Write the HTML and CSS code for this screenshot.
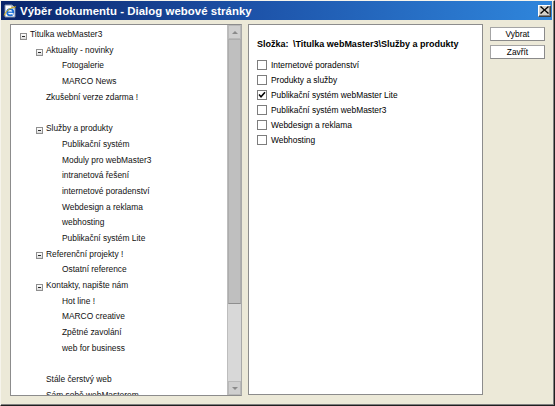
FILE: index.html
```html
<!DOCTYPE html>
<html lang="cs">
<head>
<meta charset="utf-8">
<title>Výběr dokumentu - Dialog webové stránky</title>
<link rel="stylesheet" href="styles.css">
</head>
<body>
<div class="window">
  <div class="titlebar">
    <svg class="app-icon" viewBox="0 0 14 14" width="14" height="14">
      <path d="M2 1 H9 L12 4 V13 H2 Z" fill="#fff" stroke="#7a8aa8" stroke-width="1"/>
      <path d="M9 1 V4 H12" fill="#dfe6f2" stroke="#7a8aa8" stroke-width="1"/>
      <circle cx="7.2" cy="8.2" r="3.1" fill="none" stroke="#1b6fd6" stroke-width="1.8"/>
      <path d="M4.4 8.2 H10.2" stroke="#1b6fd6" stroke-width="1.3"/>
      <path d="M8.6 9.6 L10.6 10.2" stroke="#fff" stroke-width="1.4"/>
      <path d="M1.2 11.5 C3 6 9 3 13 2.8" fill="none" stroke="#e8b400" stroke-width="1"/>
    </svg>
    <span class="title">Výběr dokumentu - Dialog webové stránky</span>
    <span class="close">
      <svg viewBox="0 0 9 8" width="9" height="8"><path d="M1 0 L4.5 3.3 L8 0 L9 1 L5.5 4 L9 7 L8 8 L4.5 4.7 L1 8 L0 7 L3.5 4 L0 1 Z" fill="#000"/></svg>
    </span>
  </div>
  <div class="content">
    <div class="tree-panel">
      <div class="tree">
        <div class="row l0"><span class="twisty minus"></span>Titulka webMaster3</div>
        <div class="row l1"><span class="twisty minus"></span>Aktuality - novinky</div>
        <div class="row l2"><span class="twisty"></span>Fotogalerie</div>
        <div class="row l2"><span class="twisty"></span>MARCO News</div>
        <div class="row l1"><span class="twisty"></span>Zkušební verze zdarma !</div>
        <div class="row l1"><span class="twisty"></span></div>
        <div class="row l1"><span class="twisty minus"></span>Služby a produkty</div>
        <div class="row l2"><span class="twisty"></span>Publikační systém</div>
        <div class="row l2"><span class="twisty"></span>Moduly pro webMaster3</div>
        <div class="row l2"><span class="twisty"></span>intranetová řešení</div>
        <div class="row l2"><span class="twisty"></span>internetové poradenství</div>
        <div class="row l2"><span class="twisty"></span>Webdesign a reklama</div>
        <div class="row l2"><span class="twisty"></span>webhosting</div>
        <div class="row l2"><span class="twisty"></span>Publikační systém Lite</div>
        <div class="row l1"><span class="twisty minus"></span>Referenční projekty !</div>
        <div class="row l2"><span class="twisty"></span>Ostatní reference</div>
        <div class="row l1"><span class="twisty minus"></span>Kontakty, napište nám</div>
        <div class="row l2"><span class="twisty"></span>Hot line !</div>
        <div class="row l2"><span class="twisty"></span>MARCO creative</div>
        <div class="row l2"><span class="twisty"></span>Zpětné zavolání</div>
        <div class="row l2"><span class="twisty"></span>web for business</div>
        <div class="row l1"><span class="twisty"></span></div>
        <div class="row l1"><span class="twisty"></span>Stále čerstvý web</div>
        <div class="row l1"><span class="twisty"></span>Sám sobě webMasterem</div>
      </div>
      <div class="scrollbar">
        <div class="sb-btn"><span class="arrow up"></span></div>
        <div class="sb-thumb"></div>
        <div class="sb-track"></div>
        <div class="sb-btn"><span class="arrow down"></span></div>
      </div>
    </div>
    <div class="list-panel">
      <div class="folder"><span class="folder-label">Složka:</span> <span class="folder-path">\Titulka webMaster3\Služby a produkty</span></div>
      <div class="checks">
        <div class="check-row"><span class="box"></span>Internetové poradenství</div>
        <div class="check-row"><span class="box"></span>Produkty a služby</div>
        <div class="check-row"><span class="box checked"><svg viewBox="0 0 8 8" width="8" height="8"><path d="M1 3.6 L3 5.8 L7 1.2" fill="none" stroke="#000" stroke-width="1.5"/></svg></span>Publikační systém webMaster Lite</div>
        <div class="check-row"><span class="box"></span>Publikační systém webMaster3</div>
        <div class="check-row"><span class="box"></span>Webdesign a reklama</div>
        <div class="check-row"><span class="box"></span>Webhosting</div>
      </div>
    </div>
    <div class="buttons">
      <div class="btn">Vybrat</div>
      <div class="btn">Zavřít</div>
    </div>
  </div>
</div>
</body>
</html>
```
FILE: styles.css
```css
html, body {
  margin: 0;
  padding: 0;
  background: #ece9d8;
}
body {
  font-family: "Liberation Sans", Arial, sans-serif;
  font-size: 8.4px;
  color: #000;
}
.window {
  width: 555px;
  height: 406px;
  box-sizing: border-box;
  background: #ece9d8;
  border-style: solid;
  border-width: 1px 1px 1px 1px;
  border-color: #f6f4ec #202020 #202020 #f6f4ec;
  box-shadow: inset -1px -1px 0 #808080;
  display: flex;
  flex-direction: column;
}
.titlebar {
  height: 19px;
  margin-right: 2px;
  display: flex;
  align-items: center;
  padding: 0 1px 0 2px;
  background: linear-gradient(to right, #0a246a 0%, #1d52a8 45%, #2f86dc 100%);
  color: #fff;
}
.app-icon {
  flex: none;
  margin-right: 3px;
}
.title {
  flex: 1;
  font-size: 11.4px;
  font-weight: bold;
  white-space: nowrap;
  letter-spacing: 0.05px;
}
.close {
  flex: none;
  width: 13px;
  height: 12px;
  box-sizing: border-box;
  background: #d4d0c8;
  border-style: solid;
  border-width: 1px;
  border-color: #fff #404040 #404040 #fff;
  box-shadow: inset -1px -1px 0 #808080;
  display: flex;
  align-items: center;
  justify-content: center;
  padding-bottom: 1px;
}
.content {
  flex: 1;
  display: flex;
  align-items: flex-start;
  padding: 4px 0 0 9px;
}
.tree-panel {
  width: 232px;
  height: 372px;
  box-sizing: border-box;
  border: 1px solid #8c8c8c;
  border-right-color: #a8a8a8;
  background: #fff;
  display: flex;
  overflow: hidden;
}
.tree {
  flex: 1;
  padding-top: 2px;
  overflow: hidden;
  color: #111;
}
.row {
  height: 15.7px;
  line-height: 15.7px;
  display: flex;
  align-items: center;
  white-space: nowrap;
}
.row.l0 { padding-left: 9px; }
.row.l1 { padding-left: 25px; }
.row.l2 { padding-left: 41px; }
.twisty {
  flex: none;
  width: 7px;
  height: 7px;
  margin-right: 3px;
  margin-top: 3px;
  box-sizing: border-box;
  position: relative;
}
.twisty.minus {
  border: 1px solid #8f8f8f;
  background: linear-gradient(#ffffff, #dcdcdc);
}
.twisty.minus::after {
  content: "";
  position: absolute;
  left: 1px;
  top: 2px;
  width: 3px;
  height: 1px;
  background: #2a2a2a;
}
.scrollbar {
  flex: none;
  width: 14px;
  display: flex;
  flex-direction: column;
  background: #d6d6d6;
  border-left: 1px solid #bdbdbd;
  box-sizing: border-box;
}
.sb-btn {
  flex: none;
  height: 14px;
  box-sizing: border-box;
  background: #cfcfcf;
  border: 1px solid #b9b9b9;
  display: flex;
  align-items: center;
  justify-content: center;
}
.arrow {
  width: 0;
  height: 0;
  border-left: 3px solid transparent;
  border-right: 3px solid transparent;
}
.arrow.up { border-bottom: 3px solid #8a8a8a; }
.arrow.down { border-top: 3px solid #8a8a8a; }
.sb-thumb {
  flex: none;
  height: 265px;
  box-sizing: border-box;
  background: #bfbfbf;
  border: 1px solid #adadad;
  border-bottom-color: #8e8e8e;
}
.sb-track {
  flex: 1;
  background: #d8d8d8;
}
.list-panel {
  width: 235px;
  height: 371px;
  margin-left: 6px;
  box-sizing: border-box;
  border: 1px solid #8c8c8c;
  background: #fff;
  padding: 13px 0 0 8px;
}
.folder {
  height: 12px;
  line-height: 12px;
  font-weight: bold;
  font-size: 9px;
  white-space: nowrap;
}
.folder-label {
  margin-right: 2px;
}
.checks {
  margin-top: 7.5px;
}
.check-row {
  height: 15px;
  display: flex;
  align-items: center;
  white-space: nowrap;
}
.box {
  flex: none;
  width: 10px;
  height: 10px;
  box-sizing: border-box;
  border: 1px solid #7d7d7d;
  background: #fff;
  margin-right: 4px;
  display: flex;
  align-items: center;
  justify-content: center;
}
.buttons {
  margin-left: 7px;
  padding-top: 3px;
  width: 55px;
  display: flex;
  flex-direction: column;
  gap: 4px;
}
.btn {
  height: 14px;
  box-sizing: border-box;
  background: #fff;
  border: 1px solid #a4a4a4;
  border-right-color: #8a8a8a;
  border-bottom-color: #8a8a8a;
  text-align: center;
  line-height: 12px;
}
```
